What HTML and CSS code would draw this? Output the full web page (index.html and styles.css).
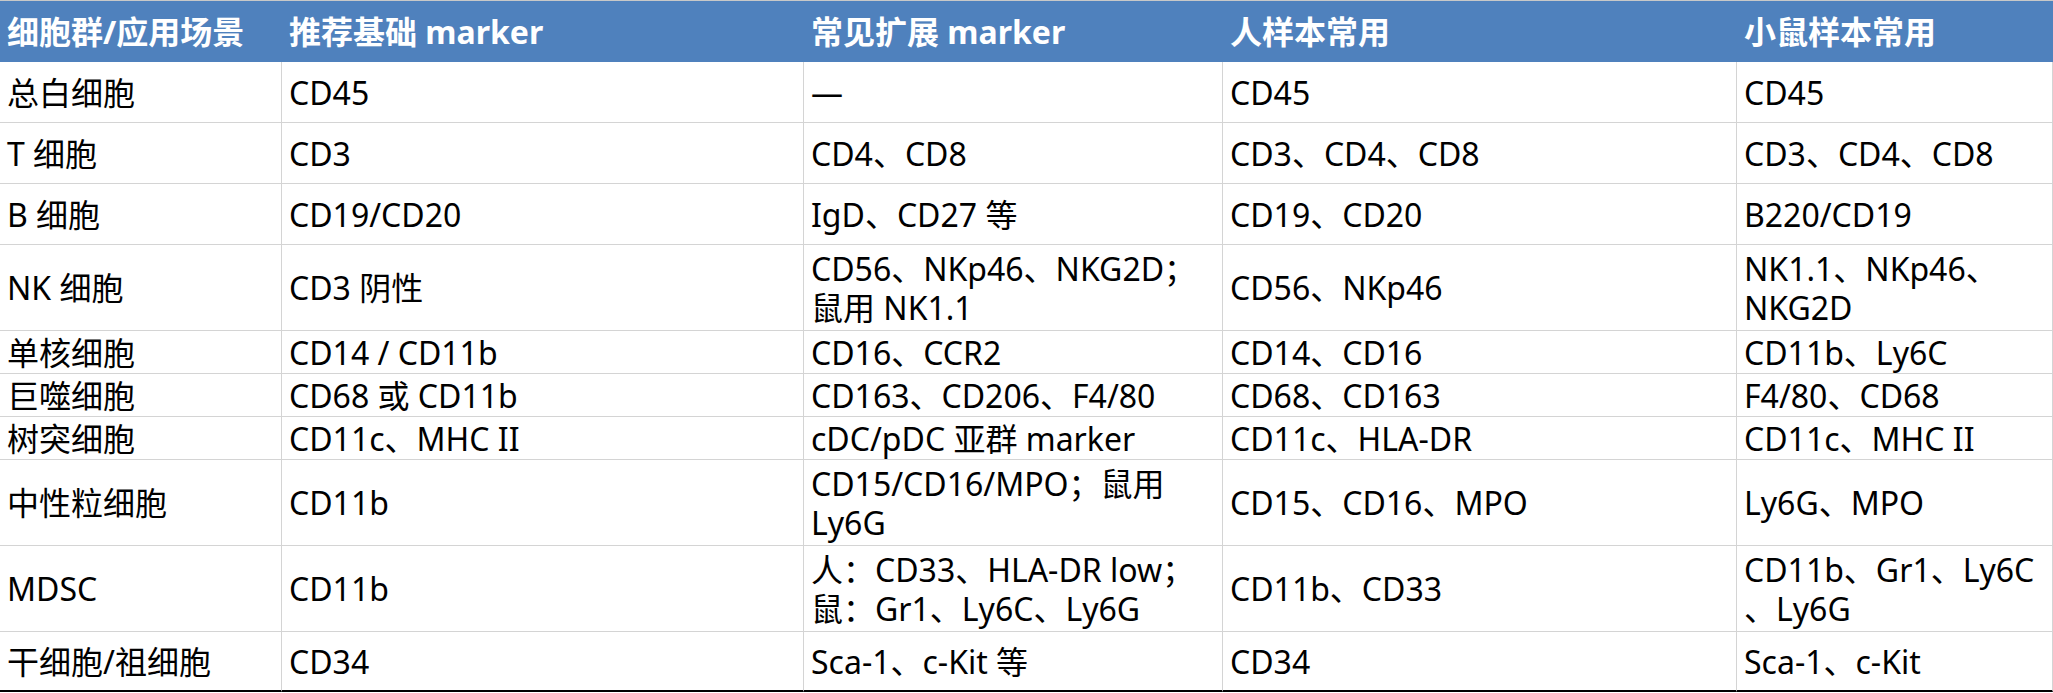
FILE: index.html
```html
<!DOCTYPE html>
<html lang="zh-CN">
<head>
<meta charset="utf-8">
<title>细胞群 marker 表</title>
<link rel="stylesheet" href="styles.css">
</head>
<body>
<div class="sheet">
  <div class="row head">
    <div class="cell">细胞群/应用场景</div>
    <div class="cell">推荐基础 marker</div>
    <div class="cell">常见扩展 marker</div>
    <div class="cell">人样本常用</div>
    <div class="cell">小鼠样本常用</div>
  </div>
  <div class="row h61">
    <div class="cell">总白细胞</div>
    <div class="cell">CD45</div>
    <div class="cell">—</div>
    <div class="cell">CD45</div>
    <div class="cell">CD45</div>
  </div>
  <div class="row h61">
    <div class="cell">T 细胞</div>
    <div class="cell">CD3</div>
    <div class="cell">CD4、CD8</div>
    <div class="cell">CD3、CD4、CD8</div>
    <div class="cell">CD3、CD4、CD8</div>
  </div>
  <div class="row h61">
    <div class="cell">B 细胞</div>
    <div class="cell">CD19/CD20</div>
    <div class="cell">IgD、CD27 等</div>
    <div class="cell">CD19、CD20</div>
    <div class="cell">B220/CD19</div>
  </div>
  <div class="row h86">
    <div class="cell">NK 细胞</div>
    <div class="cell">CD3 阴性</div>
    <div class="cell">CD56、NKp46、NKG2D；<br>鼠用 NK1.1</div>
    <div class="cell">CD56、NKp46</div>
    <div class="cell">NK1.1、NKp46、<br>NKG2D</div>
  </div>
  <div class="row h43">
    <div class="cell">单核细胞</div>
    <div class="cell">CD14 / CD11b</div>
    <div class="cell">CD16、CCR2</div>
    <div class="cell">CD14、CD16</div>
    <div class="cell">CD11b、Ly6C</div>
  </div>
  <div class="row h43">
    <div class="cell">巨噬细胞</div>
    <div class="cell">CD68 或 CD11b</div>
    <div class="cell">CD163、CD206、F4/80</div>
    <div class="cell">CD68、CD163</div>
    <div class="cell">F4/80、CD68</div>
  </div>
  <div class="row h43">
    <div class="cell">树突细胞</div>
    <div class="cell">CD11c、MHC II</div>
    <div class="cell">cDC/pDC 亚群 marker</div>
    <div class="cell">CD11c、HLA-DR</div>
    <div class="cell">CD11c、MHC II</div>
  </div>
  <div class="row h86">
    <div class="cell">中性粒细胞</div>
    <div class="cell">CD11b</div>
    <div class="cell">CD15/CD16/MPO；鼠用<br>Ly6G</div>
    <div class="cell">CD15、CD16、MPO</div>
    <div class="cell">Ly6G、MPO</div>
  </div>
  <div class="row h86">
    <div class="cell">MDSC</div>
    <div class="cell">CD11b</div>
    <div class="cell">人：CD33、HLA-DR low；<br>鼠：Gr1、Ly6C、Ly6G</div>
    <div class="cell">CD11b、CD33</div>
    <div class="cell">CD11b、Gr1、Ly6C<br>、Ly6G</div>
  </div>
  <div class="row last">
    <div class="cell">干细胞/祖细胞</div>
    <div class="cell">CD34</div>
    <div class="cell">Sca-1、c-Kit 等</div>
    <div class="cell">CD34</div>
    <div class="cell">Sca-1、c-Kit</div>
  </div>
</div>
</body>
</html>
```
FILE: styles.css
```css
html, body {
  margin: 0;
  padding: 0;
  background: #ffffff;
}

.sheet {
  width: 2053px;
  font-family: "Noto Sans", "Noto Sans CJK SC", sans-serif;
  font-size: 32px;
  line-height: 39px;
  color: #000000;
}

.row {
  display: grid;
  grid-template-columns: 282px 522px 419px 514px 316px;
}

.cell {
  box-sizing: border-box;
  display: flex;
  align-items: center;
  padding-left: 7px;
  border-right: 1px solid #d4d4d4;
  border-bottom: 1px solid #d4d4d4;
  white-space: nowrap;
  overflow: hidden;
}

.row .cell:first-child {
  padding-left: 7px;
}

.head {
  height: 62px;
  background: #4f81bd;
  border-top: 1px solid #c8c8c8;
  box-sizing: border-box;
}

.head .cell {
  color: #ffffff;
  font-weight: 700;
  border: none;
}

.h61 { height: 61px; }
.h86 { height: 86px; }
.h43 { height: 43px; }

.last { height: 60px; }
.last .cell { border-bottom: 2px solid #000000; }
```
